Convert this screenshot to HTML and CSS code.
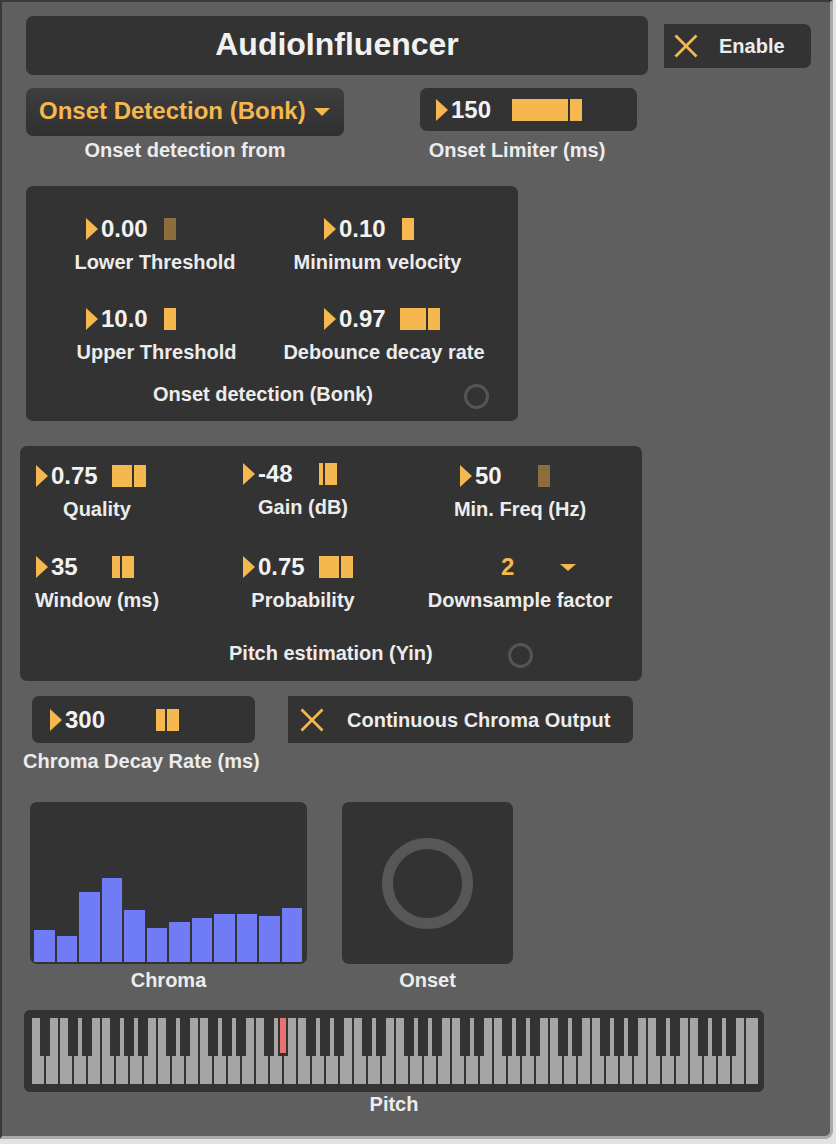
FILE: index.html
```html
<!DOCTYPE html>
<html>
<head>
<meta charset="utf-8">
<title>AudioInfluencer</title>
<link rel="stylesheet" href="styles.css">
</head>
<body>
<div class="device">

  <div class="header">
    <div class="title">AudioInfluencer</div>
    <div class="toggle enable">
      <svg class="xmark" width="24" height="24" viewBox="0 0 24 24"><path d="M1.5 1.5 L22.5 22.5 M22.5 1.5 L1.5 22.5"/></svg>
      <span class="toggle-text">Enable</span>
    </div>
  </div>

  <div class="row2">
    <div class="group g-menu">
      <div class="menu"><span class="menu-text">Onset Detection (Bonk)</span><span class="caret"></span></div>
      <div class="label">Onset detection from</div>
    </div>
    <div class="group g-limiter">
      <div class="numbox limiter">
        <span class="tri"></span><span class="val">150</span>
        <span class="track"><span class="fill" style="width:56px"></span><span class="handle"></span></span>
      </div>
      <div class="label lbl-limiter">Onset Limiter (ms)</div>
    </div>
  </div>

  <div class="panel bonk">
    <div class="grid2">
      <div class="ctl col-l">
        <div class="numbox"><span class="tri"></span><span class="val">0.00</span>
          <span class="track"><span class="fill" style="width:0px"></span><span class="handle dim"></span></span></div>
        <div class="ctl-label">Lower Threshold</div>
      </div>
      <div class="ctl col-r">
        <div class="numbox"><span class="tri"></span><span class="val">0.10</span>
          <span class="track"><span class="fill" style="width:0px"></span><span class="handle"></span></span></div>
        <div class="ctl-label shift-left">Minimum velocity</div>
      </div>
      <div class="ctl col-l">
        <div class="numbox"><span class="tri"></span><span class="val">10.0</span>
          <span class="track"><span class="fill" style="width:0px"></span><span class="handle"></span></span></div>
        <div class="ctl-label shift-right-small">Upper Threshold</div>
      </div>
      <div class="ctl col-r">
        <div class="numbox"><span class="tri"></span><span class="val">0.97</span>
          <span class="track"><span class="fill" style="width:26px"></span><span class="handle"></span></span></div>
        <div class="ctl-label shift-right">Debounce decay rate</div>
      </div>
    </div>
    <div class="footer bonk-footer">
      <span class="footer-text">Onset detection (Bonk)</span>
      <span class="ring"></span>
    </div>
  </div>

  <div class="panel yin">
    <div class="grid3">
      <div class="ctl c1">
        <div class="numbox"><span class="tri"></span><span class="val">0.75</span>
          <span class="track"><span class="fill" style="width:20px"></span><span class="handle"></span></span></div>
        <div class="ctl-label">Quality</div>
      </div>
      <div class="ctl c2 up2">
        <div class="numbox"><span class="tri"></span><span class="val">-48</span>
          <span class="track"><span class="fill" style="width:4px"></span><span class="handle"></span></span></div>
        <div class="ctl-label">Gain (dB)</div>
      </div>
      <div class="ctl c3">
        <div class="numbox"><span class="tri"></span><span class="val">50</span>
          <span class="track"><span class="fill" style="width:0px"></span><span class="handle dim"></span></span></div>
        <div class="ctl-label">Min. Freq (Hz)</div>
      </div>
      <div class="ctl c1">
        <div class="numbox"><span class="tri"></span><span class="val">35</span>
          <span class="track"><span class="fill" style="width:8px"></span><span class="handle"></span></span></div>
        <div class="ctl-label">Window (ms)</div>
      </div>
      <div class="ctl c2">
        <div class="numbox"><span class="tri"></span><span class="val">0.75</span>
          <span class="track"><span class="fill" style="width:20px"></span><span class="handle"></span></span></div>
        <div class="ctl-label">Probability</div>
      </div>
      <div class="ctl c3">
        <div class="umenu"><span class="umenu-val">2</span><span class="caret small"></span></div>
        <div class="ctl-label">Downsample factor</div>
      </div>
    </div>
    <div class="footer yin-footer">
      <span class="footer-text">Pitch estimation (Yin)</span>
      <span class="ring"></span>
    </div>
  </div>

  <div class="row-chroma">
    <div class="g-decay">
      <div class="numbox decay">
        <span class="tri"></span><span class="val val-wide">300</span>
        <span class="track"><span class="fill" style="width:9px"></span><span class="handle"></span></span>
      </div>
      <div class="label lbl-decay">Chroma Decay Rate (ms)</div>
    </div>
    <div class="toggle chroma-toggle">
      <svg class="xmark" width="24" height="24" viewBox="0 0 24 24"><path d="M1.5 1.5 L22.5 22.5 M22.5 1.5 L1.5 22.5"/></svg>
      <span class="toggle-text">Continuous Chroma Output</span>
    </div>
  </div>

  <div class="row-vis">
    <div class="group">
      <div class="chroma-box">
        <span class="cbar" style="height:32px"></span>
        <span class="cbar" style="height:26px"></span>
        <span class="cbar" style="height:70px"></span>
        <span class="cbar" style="height:84px"></span>
        <span class="cbar" style="height:52px"></span>
        <span class="cbar" style="height:34px"></span>
        <span class="cbar" style="height:40px"></span>
        <span class="cbar" style="height:44px"></span>
        <span class="cbar" style="height:48px"></span>
        <span class="cbar" style="height:48px"></span>
        <span class="cbar" style="height:46px"></span>
        <span class="cbar" style="height:54px"></span>
      </div>
      <div class="label lbl-vis">Chroma</div>
    </div>
    <div class="group g-onset">
      <div class="onset-box"><span class="ring-big"></span></div>
      <div class="label lbl-vis">Onset</div>
    </div>
  </div>

  <div class="group g-piano">
    <svg class="piano" width="740" height="82" viewBox="0 0 740 82">
      <defs>
        <pattern id="wk" patternUnits="userSpaceOnUse" x="8" y="8" width="14" height="66">
          <rect x="0" y="0" width="12" height="66" fill="#a5a5a5"/>
        </pattern>
        <pattern id="bk" patternUnits="userSpaceOnUse" x="36" y="8" width="98" height="38">
          <rect x="8" y="0" width="10" height="38" fill="#333333"/>
          <rect x="22" y="0" width="10" height="38" fill="#333333"/>
          <rect x="50" y="0" width="10" height="38" fill="#333333"/>
          <rect x="64" y="0" width="10" height="38" fill="#333333"/>
          <rect x="78" y="0" width="10" height="38" fill="#333333"/>
        </pattern>
      </defs>
      <rect x="0" y="0" width="740" height="82" rx="6" fill="#333333"/>
      <rect x="8" y="8" width="726" height="66" fill="url(#wk)"/>
      <rect x="12" y="8" width="718" height="38" fill="url(#bk)"/>
      <rect x="256" y="8" width="6" height="35" fill="#ee7171"/>
    </svg>
    <div class="label lbl-pitch">Pitch</div>
  </div>

</div>
</body>
</html>
```

FILE: styles.css
```css
* { box-sizing: border-box; }

html, body {
  margin: 0;
  padding: 0;
}

body {
  width: 836px;
  height: 1144px;
  overflow: hidden;
  background: #e3e3e3;
  font-family: "Liberation Sans", Arial, sans-serif;
  font-weight: bold;
  color: #ececec;
}

.device {
  width: 833px;
  height: 1139px;
  background: #5f5f5f;
  border-top: 2px solid #3a3a3a;
  border-left: 2px solid #3a3a3a;
  border-right: 3px solid #a9a9a9;
  border-bottom: 3px solid #a9a9a9;
  border-bottom-right-radius: 8px;
  display: flex;
  flex-direction: column;
  align-items: flex-start;
}

/* ---------- header ---------- */
.header {
  display: flex;
  align-items: flex-start;
  margin: 14px 0 0 24px;
}

.title {
  width: 622px;
  height: 59px;
  background: #333333;
  border-radius: 7px;
  display: flex;
  align-items: center;
  justify-content: center;
  padding-bottom: 3px;
  font-size: 32px;
  line-height: 32px;
  color: #f1f1f1;
}

.toggle {
  background: #333333;
  border-radius: 0 7px 7px 0;
  display: flex;
  align-items: center;
}

.xmark path {
  stroke: #f5b84e;
  stroke-width: 2.8;
  fill: none;
}

.toggle-text {
  font-size: 20px;
  line-height: 20px;
  color: #ececec;
  white-space: nowrap;
}

.enable {
  width: 147px;
  height: 44px;
  margin: 8px 0 0 16px;
  padding: 0 0 1px 10px;
}

.enable .toggle-text { margin-left: 21px; }

/* ---------- generic groups / labels ---------- */
.group {
  display: flex;
  flex-direction: column;
  align-items: center;
}

.label {
  font-size: 20px;
  line-height: 20px;
  white-space: nowrap;
  color: #ececec;
}

/* ---------- row 2 ---------- */
.row2 {
  display: flex;
  align-items: flex-start;
  margin: 13px 0 0 24px;
}

.g-menu { width: 318px; }

.menu {
  width: 318px;
  height: 48px;
  border-radius: 7px;
  background: linear-gradient(#3e3e3e, #303030);
  display: flex;
  align-items: center;
  padding: 0 0 3px 13px;
  font-size: 24px;
  line-height: 24px;
  color: #f5b84e;
  white-space: nowrap;
}

.caret {
  width: 0;
  height: 0;
  border-left: 8px solid transparent;
  border-right: 8px solid transparent;
  border-top: 8px solid #f5b84e;
  margin: 3px 0 0 8px;
}

.caret.small {
  border-top-width: 7px;
  margin: 0 0 0 46px;
}

.g-menu .label { margin-top: 4px; }

.g-limiter {
  width: 217px;
  margin-left: 76px;
}

.g-limiter .lbl-limiter {
  margin-top: 9px;
  margin-right: 23px;
}

/* ---------- number boxes ---------- */
.numbox {
  display: flex;
  align-items: center;
  height: 24px;
}

.tri {
  width: 0;
  height: 0;
  border-top: 11.5px solid transparent;
  border-bottom: 11.5px solid transparent;
  border-left: 12px solid #f5b84e;
  flex: none;
}

.val {
  margin-left: 3px;
  width: 61px;
  flex: none;
  font-size: 24px;
  line-height: 24px;
  color: #f2f2f2;
  white-space: nowrap;
}

.val-wide { width: 91px; }

.track {
  display: flex;
  height: 22px;
}

.fill {
  height: 22px;
  background: #f5b84e;
  margin-right: 2px;
}

.handle {
  width: 12px;
  height: 22px;
  background: #f5b84e;
}

.handle.dim { background: #8b6d3e; }

.limiter {
  width: 217px;
  height: 43px;
  background: #333333;
  border-radius: 7px;
  padding-left: 16px;
}

/* ---------- panels ---------- */
.panel {
  background: #333333;
  border-radius: 7px;
  height: 235px;
}

.ctl {
  display: flex;
  flex-direction: column;
  align-self: start;
}

.ctl-label {
  margin-top: 11px;
  font-size: 20px;
  line-height: 20px;
  text-align: center;
  white-space: nowrap;
  color: #ececec;
}

.shift-left { margin-right: 7px; }
.shift-right { margin-left: 6px; }
.shift-right-small { margin-left: 3px; }

.footer {
  display: flex;
  align-items: flex-start;
}

.footer-text {
  font-size: 20px;
  line-height: 20px;
  white-space: nowrap;
}

.ring {
  width: 25px;
  height: 25px;
  border: 3px solid #555555;
  border-radius: 50%;
  margin-left: auto;
  flex: none;
}

/* Bonk */
.bonk {
  width: 492px;
  margin: 26px 0 0 24px;
  padding: 31px 29px 12px 28px;
}

.grid2 {
  display: grid;
  grid-template-columns: 202px 210px;
  column-gap: 20px;
  row-gap: 35px;
}

.col-l .numbox { padding-left: 32px; }
.col-r .numbox { padding-left: 48px; }

.bonk-footer {
  margin-top: 22px;
  padding-left: 99px;
}

/* Yin */
.yin {
  width: 622px;
  margin: 25px 0 0 18px;
  padding: 18px 109px 13px 10px;
}

.grid3 {
  display: grid;
  grid-template-columns: 134px 209px 247px;
  row-gap: 36px;
  width: 590px;
}

.c1 .numbox { padding-left: 6px; }
.c2 { padding-left: 69px; }
.c2 .numbox { padding-left: 10px; }
.c3 { padding-left: 47px; }
.c3 .numbox { padding-left: 40px; }
.up2 { margin-top: -2px; }

.umenu {
  display: flex;
  align-items: center;
  height: 24px;
  padding-left: 81px;
}

.umenu-val {
  font-size: 24px;
  line-height: 24px;
  color: #f5b84e;
}

.yin-footer {
  margin-top: 33px;
  padding-left: 199px;
}

/* ---------- chroma decay row ---------- */
.row-chroma {
  display: flex;
  align-items: flex-start;
  margin: 15px 0 0 30px;
}

.g-decay {
  width: 223px;
  display: flex;
  flex-direction: column;
  align-items: flex-start;
}

.decay {
  width: 223px;
  height: 47px;
  background: #333333;
  border-radius: 7px;
  padding-left: 18px;
}

.lbl-decay {
  margin: 8px 0 0 -9px;
}

.chroma-toggle {
  width: 345px;
  height: 47px;
  margin-left: 33px;
  padding-left: 12px;
}

.chroma-toggle .toggle-text { margin-left: 23px; }

/* ---------- visualisers ---------- */
.row-vis {
  display: flex;
  align-items: flex-start;
  margin: 31px 0 0 28px;
}

.chroma-box {
  width: 277px;
  height: 162px;
  background: #333333;
  border-radius: 7px;
  display: flex;
  align-items: flex-end;
  gap: 2px;
  padding: 0 5px 2px 4px;
}

.cbar {
  flex: 1;
  background: #6f7cf6;
}

.lbl-vis { margin-top: 6px; }

.g-onset { margin-left: 35px; }

.onset-box {
  width: 171px;
  height: 162px;
  background: #333333;
  border-radius: 7px;
  display: flex;
  align-items: center;
  justify-content: center;
}

.ring-big {
  width: 91px;
  height: 91px;
  border: 11px solid #575757;
  border-radius: 50%;
}

/* ---------- piano ---------- */
.g-piano {
  margin: 20px 0 0 22px;
}

.piano { display: block; }

.lbl-pitch { margin-top: 2px; }
```
